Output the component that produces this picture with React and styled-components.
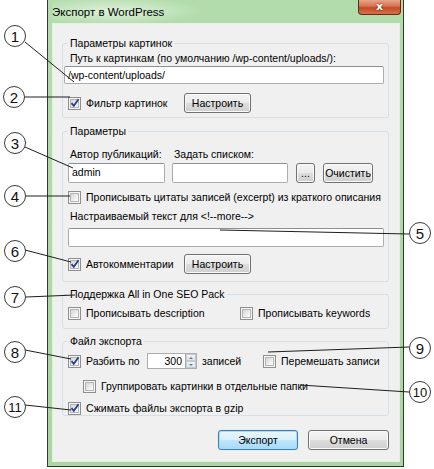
import styled, { createGlobalStyle, css } from "styled-components"

const Global = createGlobalStyle`
  html, body {
    margin: 0;
    padding: 0;
    background: #ffffff;
  }
  body {
    font-family: "Liberation Sans", Arial, sans-serif;
    font-size: 10.5px;
    color: #000;
  }
`

const Page = styled.div`
  position: relative;
  width: 434px;
  height: 469px;
  overflow: hidden;
  background: #fff;
`

const Window = styled.div`
  margin: -1px 0 0 47px;
  width: 357px;
  box-sizing: border-box;
  border: 1px solid #2e3b2d;
  background: linear-gradient(180deg, #b3dcac 0%, #a9d6a1 100%);
  padding: 0 3px 4px 4px;
  display: flex;
  flex-direction: column;
`

const TitleBar = styled.div`
  height: 23px;
  display: flex;
  align-items: flex-start;
  justify-content: space-between;
  background: radial-gradient(ellipse 90px 14px at 60px 11px, rgba(236, 248, 233, 0.75), rgba(236, 248, 233, 0) 100%);
`

const Title = styled.div`
  font-size: 11.5px;
  line-height: 14px;
  margin-top: 5px;
  color: #000;
`

const CloseButton = styled.div`
  width: 43px;
  height: 15px;
  margin-right: -1px;
  box-sizing: border-box;
  border: 1px solid #6b2615;
  border-top: none;
  border-radius: 0 0 4px 4px;
  background: linear-gradient(180deg, #e7a58c 0%, #d7714f 45%, #c44a26 55%, #d4724b 100%);
  color: #fff;
  font-family: "DejaVu Sans", sans-serif;
  font-weight: bold;
  font-size: 11px;
  line-height: 13px;
  text-align: center;
  text-shadow: 0 0 2px #5a1a0a;
`

const Client = styled.div`
  border: 1px solid #e6f1e3;
  background: #f0f0f0;
  padding: 0 10px 11px 9px;
  display: flex;
  flex-direction: column;
`

const Group = styled.fieldset`
  margin: ${(p) => p.$top}px 0 0 0;
  padding: 0 4px ${(p) => p.$bottom}px 5px;
  border: 1px solid #d5dfe5;
  border-radius: 3px;
  min-width: 0;
  display: flex;
  flex-direction: column;
`

const Legend = styled.legend`
  padding: 0 2px;
  font-size: 10.5px;
  line-height: 14px;
`

const Label = styled.div`
  line-height: 14px;
  padding-left: 2px;
  margin-top: ${(p) => p.$top || 0}px;
  white-space: nowrap;
`

const TextInput = styled.div`
  box-sizing: border-box;
  height: ${(p) => p.$h || 19}px;
  margin-top: ${(p) => p.$top || 0}px;
  margin-left: ${(p) => p.$left || 0}px;
  width: ${(p) => (p.$w ? `${p.$w}px` : "auto")};
  border: 1px solid #abadb3;
  border-top-color: #8e9096;
  border-radius: 2px;
  background: #fff;
  padding: 0 3px;
  line-height: 16px;
  white-space: nowrap;
`

const Row = styled.div`
  display: flex;
  align-items: center;
  height: ${(p) => p.$h || 14}px;
  margin-top: ${(p) => p.$top || 0}px;
  padding-left: ${(p) => p.$indent || 0}px;
`

const Button = styled.div`
  box-sizing: border-box;
  width: ${(p) => p.$w}px;
  height: 20px;
  margin-left: ${(p) => p.$left || 0}px;
  border: 1px solid #707070;
  border-radius: 3px;
  background: linear-gradient(180deg, #f4f4f4 0%, #ebebeb 48%, #dddddd 52%, #cfcfcf 100%);
  box-shadow: inset 0 0 0 1px #fbfbfb;
  display: flex;
  align-items: center;
  justify-content: center;
  line-height: 14px;
  white-space: nowrap;
  ${(p) =>
    p.$default &&
    css`
      border-color: #3c7fb1;
      box-shadow: inset 0 0 0 1px #a9dcf6, 0 0 1px #9fd0ee;
      background: linear-gradient(180deg, #eaf6fd 0%, #d9f0fc 48%, #bee6fd 52%, #a7d9f5 100%);
    `}
`

const CheckWrap = styled.div`
  display: flex;
  align-items: center;
  flex: none;
  width: ${(p) => (p.$w ? `${p.$w}px` : "auto")};
  white-space: nowrap;
`

const Box = styled.div`
  width: 13px;
  height: 13px;
  box-sizing: border-box;
  border: 1px solid #8f8f8f;
  background: #f4f4f4;
  padding: 1px;
  margin-right: 5px;
  flex: none;
`

const BoxInner = styled.div`
  width: 9px;
  height: 9px;
  box-sizing: border-box;
  border: 1px solid #b5b5b5;
  background: linear-gradient(135deg, #d4d4d4 0%, #f2f2f2 70%, #ffffff 100%);
  position: relative;
`

const Tick = styled.svg`
  position: absolute;
  left: -1px;
  top: -2px;
`

const Check = ({ checked, width, children }) => (
  <CheckWrap $w={width}>
    <Box>
      <BoxInner>
        {checked && (
          <Tick width="10" height="10" viewBox="0 0 10 10">
            <path d="M1.5 5.2 L3.8 7.8 L8.5 1.2" fill="none" stroke="#2a3e8a" strokeWidth="1.8" />
          </Tick>
        )}
      </BoxInner>
    </Box>
    {children}
  </CheckWrap>
)

const AuthorLabels = styled.div`
  display: grid;
  grid-template-columns: 104px auto;
  margin-top: 9px;
`

const GridLabel = styled.div`
  line-height: 14px;
  padding-left: 2px;
  white-space: nowrap;
`

const InputRow = styled.div`
  display: flex;
  margin-top: 2px;
`

const Spin = styled.div`
  display: flex;
  flex: none;
  height: 16px;
  margin-right: 5px;
`

const SpinField = styled.div`
  box-sizing: border-box;
  width: 38px;
  height: 16px;
  border: 1px solid #abadb3;
  border-right: none;
  background: #fff;
  text-align: right;
  padding-right: 3px;
  line-height: 14px;
`

const SpinButtons = styled.div`
  box-sizing: border-box;
  width: 12px;
  height: 16px;
  border: 1px solid #abadb3;
  background: #fff;
  display: flex;
  flex-direction: column;
`

const SpinHalf = styled.div`
  flex: 1;
  background: linear-gradient(180deg, #f3f3f3, #dfe4ea);
  border: 1px solid #c6cbd1;
  display: flex;
  align-items: center;
  justify-content: center;
`

const Arrow = styled.div`
  width: 0;
  height: 0;
  border-left: 2px solid transparent;
  border-right: 2px solid transparent;
  ${(p) =>
    p.$up
      ? css`border-bottom: 2px solid #5a7b9c;`
      : css`border-top: 2px solid #5a7b9c;`}
`

const Words = styled.span`
  flex: none;
  width: ${(p) => p.$w}px;
  white-space: nowrap;
`

const Footer = styled.div`
  display: flex;
  justify-content: flex-end;
  gap: 10px;
  margin-top: 14px;
`

const Overlay = styled.svg`
  position: absolute;
  left: 0;
  top: 0;
  pointer-events: none;
`

const Callout = styled.div`
  position: absolute;
  left: ${(p) => p.$x - 11}px;
  top: ${(p) => p.$y - 11}px;
  width: 22px;
  height: 22px;
  box-sizing: border-box;
  border: 1px solid #3a3a3a;
  border-radius: 50%;
  background: #fff;
  display: flex;
  align-items: center;
  justify-content: center;
  font-family: "Liberation Sans", Arial, sans-serif;
  font-size: ${(p) => (p.$small ? 13 : 15)}px;
  color: #111;
`

const callouts = [
  { n: 1, x: 15, y: 36, line: [25, 42, 74, 82] },
  { n: 2, x: 14, y: 97, line: [25, 97, 70, 97] },
  { n: 3, x: 15, y: 143, line: [25, 147, 73, 168] },
  { n: 4, x: 15, y: 196, line: [26, 196, 70, 196] },
  { n: 5, x: 420, y: 233, line: [409, 234, 220, 230] },
  { n: 6, x: 15, y: 251, line: [25, 250, 71, 262] },
  { n: 7, x: 15, y: 297, line: [26, 297, 75, 295] },
  { n: 8, x: 15, y: 352, line: [25, 350, 71, 359] },
  { n: 9, x: 420, y: 348, line: [409, 347, 268, 352] },
  { n: 10, x: 420, y: 392, line: [409, 392, 300, 385] },
  { n: 11, x: 15, y: 407, line: [25, 405, 71, 410] },
]

export default function App() {
  return (
    <Page>
      <Global />
      <Window>
        <TitleBar>
          <Title>Экспорт в WordPress</Title>
          <CloseButton>x</CloseButton>
        </TitleBar>
        <Client>
          <Group $top={12} $bottom={4}>
            <Legend>Параметры картинок</Legend>
            <Label $top={1}>Путь к картинкам (по умолчанию /wp-content/uploads/):</Label>
            <TextInput $top={1} $h={18} $left={-4}>/wp-content/uploads/</TextInput>
            <Row $top={9} $h={20}>
              <Check checked width={116}>Фильтр картинок</Check>
              <Button $w={67}>Настроить</Button>
            </Row>
          </Group>

          <Group $top={6} $bottom={7}>
            <Legend>Параметры</Legend>
            <AuthorLabels>
              <GridLabel>Автор публикаций:</GridLabel>
              <GridLabel>Задать списком:</GridLabel>
            </AuthorLabels>
            <InputRow>
              <TextInput $w={97} $h={20}>admin</TextInput>
              <TextInput $w={116} $h={20} $left={7} />
              <Button $w={19} $left={8}>...</Button>
              <Button $w={50} $left={8}>Очистить</Button>
            </InputRow>
            <Row $top={7}>
              <Check>Прописывать цитаты записей (excerpt) из краткого описания</Check>
            </Row>
            <Label $top={5}>Настраиваемый текст для &lt;!--more--&gt;</Label>
            <TextInput $top={5} $h={19} />
            <Row $top={7} $h={20}>
              <Check checked width={116}>Автокомментарии</Check>
              <Button $w={67}>Настроить</Button>
            </Row>
          </Group>

          <Group $top={5} $bottom={8}>
            <Legend>Поддержка All in One SEO Pack</Legend>
            <Row $top={5}>
              <Check width={172}>Прописывать description</Check>
              <Check>Прописывать keywords</Check>
            </Row>
          </Group>

          <Group $top={5} $bottom={0}>
            <Legend>Файл экспорта</Legend>
            <Row $top={5} $h={16}>
              <Check checked width={79}>Разбить по</Check>
              <Spin>
                <SpinField>300</SpinField>
                <SpinButtons>
                  <SpinHalf>
                    <Arrow $up />
                  </SpinHalf>
                  <SpinHalf>
                    <Arrow />
                  </SpinHalf>
                </SpinButtons>
              </Spin>
              <Words $w={61}>записей</Words>
              <Check>Перемешать записи</Check>
            </Row>
            <Row $top={10} $indent={15}>
              <Check>Группировать картинки в отдельные папки</Check>
            </Row>
            <Row $top={8}>
              <Check checked>Сжимать файлы экспорта в gzip</Check>
            </Row>
          </Group>

          <Footer>
            <Button $w={80} $default>Экспорт</Button>
            <Button $w={81}>Отмена</Button>
          </Footer>
        </Client>
      </Window>

      <Overlay width="434" height="469">
        {callouts.map((c) => (
          <line
            key={c.n}
            x1={c.line[0]}
            y1={c.line[1]}
            x2={c.line[2]}
            y2={c.line[3]}
            stroke="#1e1e1e"
            strokeWidth="1"
          />
        ))}
      </Overlay>
      {callouts.map((c) => (
        <Callout key={c.n} $x={c.x} $y={c.y} $small={c.n > 9}>
          {c.n}
        </Callout>
      ))}
    </Page>
  )
}
